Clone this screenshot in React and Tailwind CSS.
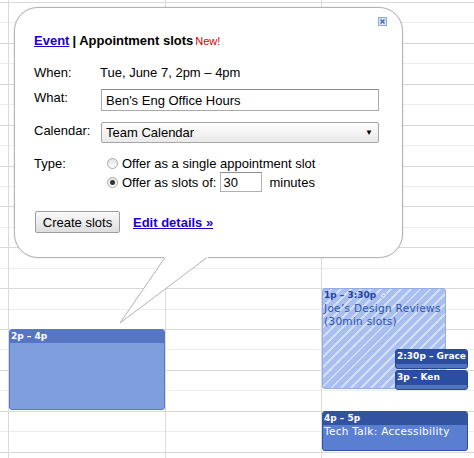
import { useState } from 'react';

const HOURS = Array.from({ length: 12 });

function Radio({ checked }) {
  return (
    <span className="relative inline-flex h-[11px] w-[11px] shrink-0 items-center justify-center rounded-full border border-[#a8a8a8] bg-gradient-to-b from-[#e4e4e4] to-[#fdfdfd]">
      {checked && <span className="h-[5px] w-[5px] rounded-full bg-[#333]" />}
    </span>
  );
}

function CloseIcon() {
  return (
    <svg width="9" height="9" viewBox="0 0 9 9">
      <rect x="0.5" y="0.5" width="8" height="8" fill="#dbe5f5" stroke="#8ea8d8" />
      <path d="M2.5 2.5 L6.5 6.5 M6.5 2.5 L2.5 6.5" stroke="#4a6db5" strokeWidth="1.5" />
    </svg>
  );
}

function CalendarGrid() {
  return (
    <>
      <div className="absolute inset-0 flex flex-col">
        <div className="h-[2px] shrink-0" />
        {HOURS.map((_, i) => (
          <div key={i} className="flex shrink-0 flex-col">
            <div className="h-[20.45px] border-t border-[#d8d8d8]" />
            <div className="h-[20.45px] border-t border-[#ececec]" />
          </div>
        ))}
      </div>
      <div className="absolute inset-0 flex">
        <div className="w-[9px] shrink-0 border-r border-[#dadada]" />
        <div className="w-[157px] shrink-0 border-r border-[#dadada]" />
        <div className="w-[156px] shrink-0 border-r border-[#dadada]" />
      </div>
    </>
  );
}

function SlotBlock() {
  // open appointment slot, drawn striped
  return (
    <div className="absolute left-[322px] top-[288px] h-[101px] w-[124px] overflow-hidden rounded-[3px] border border-[#93ace6] bg-[#a9bff0]">
      <div className="absolute inset-0 bg-[repeating-linear-gradient(135deg,transparent_0px,transparent_5px,#d3dff8_5px,#d3dff8_7px)]" />
      <div className="relative flex h-[13px] items-center gap-[4px] pl-[1px] text-[9px] font-bold leading-[13px] text-[#23459c]">
        <span>1p – 3:30p</span>
        <svg width="7" height="7" viewBox="0 0 7 7">
          <circle cx="3.5" cy="3.5" r="3" fill="#dfe6f6" stroke="#9fb3e0" />
          <circle cx="3.5" cy="3.5" r="1" fill="#9fb3e0" />
        </svg>
      </div>
      <div className="relative pl-[1px] text-[10.5px] leading-[13px] tracking-[0.3px] text-[#2f55ad]">
        Joe&rsquo;s Design Reviews
        <br />
        (30min slots)
      </div>
    </div>
  );
}

function Events() {
  return (
    <div className="font-['DejaVu_Sans',Verdana,sans-serif]">
      {/* the new 2p-4p block being created */}
      <div className="absolute left-[9px] top-[329px] flex h-[81px] w-[156px] flex-col overflow-hidden rounded-[3px] border border-[#5a79c4] bg-[#7e9ede]">
        <div className="h-[13px] bg-[#5676c4] pl-[1px] text-[9px] font-bold leading-[13px] text-white">2p – 4p</div>
      </div>

      <SlotBlock />

      {/* booked slots */}
      {[
        { label: '2:30p – Grace', top: 'top-[349px]' },
        { label: '3p – Ken', top: 'top-[370px]' },
      ].map((slot) => (
        <div
          key={slot.label}
          className={`absolute left-[395px] ${slot.top} flex h-[20px] w-[73px] flex-col overflow-hidden rounded-[3px] border border-[#244796] bg-[#5273bf]`}
        >
          <div className="h-[14px] bg-[#2b4ea0] pl-[1px] text-[9px] font-bold leading-[13px] text-white">{slot.label}</div>
        </div>
      ))}

      <div className="absolute left-[322px] top-[411px] flex h-[40px] w-[146px] flex-col overflow-hidden rounded-[3px] border border-[#2f519f] bg-[#5b7fd0]">
        <div className="h-[13px] bg-[#32539f] pl-[1px] text-[9px] font-bold leading-[13px] text-white">4p – 5p</div>
        <div className="pl-[1px] text-[10.5px] leading-[13px] tracking-[0.3px] text-white">Tech Talk: Accessibility</div>
      </div>
    </div>
  );
}

function Bubble() {
  const [title, setTitle] = useState("Ben's Eng Office Hours");
  const [slotLength, setSlotLength] = useState('30');

  return (
    <>
      <div className="absolute left-[14px] top-[7px] h-[251px] w-[389px] rounded-[24px] border border-[#b3b3b3] bg-white pl-[19px] pr-[23px] pt-[25px] text-[13px] leading-[15px] text-black shadow-[0_0_2px_rgba(0,0,0,0.15)]">
        <div className="absolute right-[15px] top-[9px]">
          <CloseIcon />
        </div>

        <div className="flex items-baseline font-bold">
          <a href="#" className="text-[#2200cc] underline">Event</a>
          <span className="ml-[3px]">| Appointment slots</span>
          <span className="ml-[2px] text-[11px] font-normal text-[#cc0000]">New!</span>
        </div>

        <div className="mt-[16px] flex">
          <div className="w-[66px] shrink-0">When:</div>
          <div>Tue, June 7, 2pm – 4pm</div>
        </div>

        <div className="mt-[10px] flex">
          <div className="w-[67px] shrink-0">What:</div>
          <input
            value={title}
            onChange={(e) => setTitle(e.target.value)}
            className="-mt-[1px] h-[22px] w-[279px] border border-[#a9a9a9] border-t-[#8c8c8c] px-[4px] text-[13px] outline-none"
          />
        </div>

        <div className="mt-[11px] flex">
          <div className="w-[67px] shrink-0 pt-[1px]">Calendar:</div>
          <div className="flex h-[21px] w-[279px] items-center justify-between rounded-[2px] border border-[#a5a5a5] bg-gradient-to-b from-[#ffffff] to-[#e9e9e9] pl-[4px] pr-[5px]">
            <span>Team Calendar</span>
            <span className="text-[8px]">▼</span>
          </div>
        </div>

        <div className="mt-[13px] flex">
          <div className="w-[73px] shrink-0">Type:</div>
          <div className="flex flex-col">
            <label className="flex items-center gap-[4px]">
              <Radio />
              <span>Offer as a single appointment slot</span>
            </label>
            <label className="mt-[1px] flex items-center gap-[4px]">
              <Radio checked />
              <span>Offer as slots of:</span>
              <input
                value={slotLength}
                onChange={(e) => setSlotLength(e.target.value)}
                className="h-[20px] w-[42px] border border-[#b0b0b0] border-t-[#8c8c8c] px-[2px] text-[13px] outline-none"
              />
              <span className="ml-[3px]">minutes</span>
            </label>
          </div>
        </div>

        <div className="mt-[19px] flex items-center">
          <button className="ml-[1px] h-[22px] w-[85px] rounded-[2px] border border-[#9c9c9c] bg-gradient-to-b from-[#fafafa] to-[#dedede] text-[13px]">
            Create slots
          </button>
          <a href="#" className="ml-[13px] font-bold text-[#2200cc] underline">Edit details »</a>
        </div>
      </div>

      {/* speech tail pointing at the new block */}
      <svg className="absolute left-[110px] top-[250px]" width="105" height="80" viewBox="0 0 105 80">
        <polygon points="55,7 10,73 97,7" fill="white" />
        <rect x="54" y="6" width="44" height="3" fill="white" />
        <path d="M55 7.5 L10 73 L97 7.5" fill="none" stroke="#b3b3b3" strokeWidth="1" />
      </svg>
    </>
  );
}

export default function App() {
  return (
    <div className="relative h-[458px] w-[474px] overflow-hidden bg-white font-['Liberation_Sans',Arial,sans-serif]">
      <CalendarGrid />
      <Events />
      <Bubble />
    </div>
  );
}
